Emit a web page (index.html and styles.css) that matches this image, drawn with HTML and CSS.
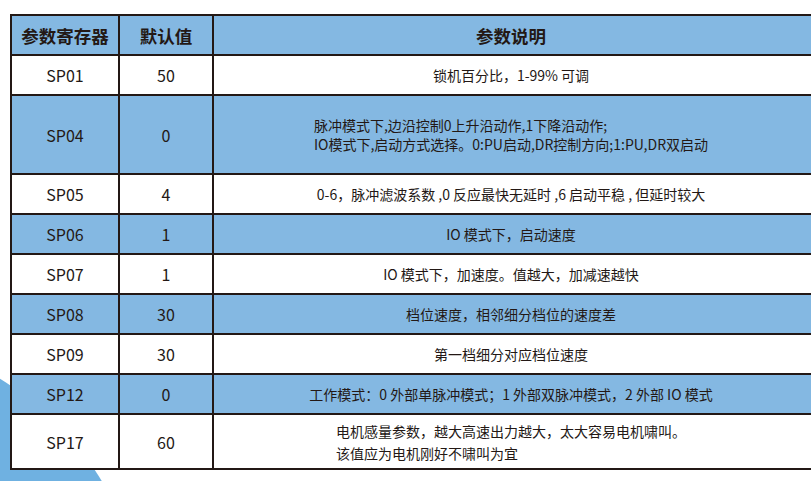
FILE: index.html
```html
<!DOCTYPE html>
<html lang="zh">
<head>
<meta charset="utf-8">
<link rel="stylesheet" href="styles.css">
</head>
<body>
<div class="page">
  <div class="blob"></div>
  <table class="params">
    <colgroup>
      <col class="c1"><col class="c2"><col class="c3">
    </colgroup>
    <thead>
      <tr class="head">
        <th>参数寄存器</th><th>默认值</th><th class="desc">参数说明</th>
      </tr>
    </thead>
    <tbody>
      <tr class="r"><td>SP01</td><td>50</td><td class="desc">锁机百分比，1-99% 可调</td></tr>
      <tr class="r blue tall"><td>SP04</td><td>0</td><td class="desc"><div class="block b19">脉冲模式下,边沿控制0上升沿动作,1下降沿动作;<br>IO模式下,启动方式选择。0:PU启动,DR控制方向;1:PU,DR双启动</div></td></tr>
      <tr class="r"><td>SP05</td><td>4</td><td class="desc">0-6，脉冲滤波系数 ,0 反应最快无延时 ,6 启动平稳 , 但延时较大</td></tr>
      <tr class="r blue"><td>SP06</td><td>1</td><td class="desc">IO 模式下，启动速度</td></tr>
      <tr class="r"><td>SP07</td><td>1</td><td class="desc">IO 模式下，加速度。值越大，加减速越快</td></tr>
      <tr class="r blue"><td>SP08</td><td>30</td><td class="desc">档位速度，相邻细分档位的速度差</td></tr>
      <tr class="r"><td>SP09</td><td>30</td><td class="desc">第一档细分对应档位速度</td></tr>
      <tr class="r blue"><td>SP12</td><td>0</td><td class="desc">工作模式：0 外部单脉冲模式；1 外部双脉冲模式，2 外部 IO 模式</td></tr>
      <tr class="r mid"><td>SP17</td><td>60</td><td class="desc"><div class="block b22">电机感量参数，越大高速出力越大，太大容易电机啸叫。<br>该值应为电机刚好不啸叫为宜</div></td></tr>
    </tbody>
  </table>
</div>
</body>
</html>
```

FILE: styles.css
```css
html, body {
  margin: 0;
  padding: 0;
  background: #ffffff;
}
body {
  width: 811px;
  height: 481px;
  overflow: hidden;
  font-family: "Noto Sans CJK SC", "Noto Sans", sans-serif;
  color: #231815;
}
.page {
  position: relative;
  width: 811px;
  height: 481px;
  overflow: hidden;
  padding: 14px 0 0 10px;
  box-sizing: border-box;
}
.blob {
  position: absolute;
  left: -471px;
  top: 333px;
  width: 618px;
  height: 618px;
  border-radius: 50%;
  background: #6fb1e1;
}
.params {
  position: relative;
  border-collapse: collapse;
  table-layout: fixed;
  width: 840px;
}
.c1 { width: 108px; }
.c2 { width: 94px; }
.c3 { width: 638px; }
.params th, .params td {
  border: 2px solid #231815;
  padding: 0;
  text-align: center;
  vertical-align: middle;
}
.params th {
  background: #84b8e2;
  font-size: 17.5px;
  font-weight: 700;
  height: 38px;
}
.params td {
  font-size: 16px;
  height: 38px;
  background: #ffffff;
}
.params .r.blue td {
  background: #84b8e2;
}
.params td.desc, .params th.desc {
  padding-right: 42px;
}
.params td.desc {
  font-size: 14px;
}
.params .tall td { height: 77px; }
.params .mid td { height: 53px; }
.block {
  display: inline-block;
  text-align: left;
}
.b19 { line-height: 19px; }
.b22 { line-height: 22px; }
```
